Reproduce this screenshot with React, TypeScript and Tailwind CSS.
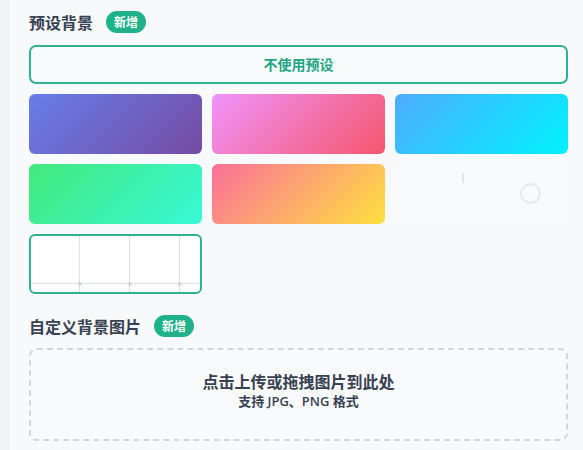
const presets = [
  "bg-[linear-gradient(135deg,#667eea_0%,#764ba2_100%)]",
  "bg-[linear-gradient(135deg,#f093fb_0%,#f5576c_100%)]",
  "bg-[linear-gradient(135deg,#4facfe_0%,#00f2fe_100%)]",
  "bg-[linear-gradient(135deg,#43e97b_0%,#38f9d7_100%)]",
  "bg-[linear-gradient(135deg,#fa709a_0%,#fee140_100%)]",
];

function Badge() {
  return (
    <span className="ml-[13px] inline-flex h-[22px] items-center rounded-full bg-[#1fb28a] px-[8px] text-[12px] font-bold leading-none text-white">
      新增
    </span>
  );
}

export default function App() {
  return (
    <div
      className="flex h-[450px] w-[583px] overflow-hidden bg-[#f8f9fb]"
      style={{ fontFamily: '"Noto Sans CJK SC", "Noto Sans", sans-serif' }}
    >
      {/* left edge */}
      <div className="w-[9px] shrink-0 border-r border-[#eceef1] bg-[#f3f4f6]" />

      <div className="flex-1 pl-5 pr-[15px] pt-[10px]">
        {/* 预设背景 */}
        <div className="flex h-[24px] items-center">
          <h3 className="text-[16px] font-bold text-[#374151]">预设背景</h3>
          <Badge />
        </div>

        <button className="mt-[11px] flex h-[39px] w-full items-center justify-center rounded-[7px] border-2 border-[#2fb292] bg-[#f8fbfb] text-[14px] font-bold text-[#22a584]">
          不使用预设
        </button>

        <div className="mt-[10px] grid grid-cols-3 gap-x-[10px] gap-y-[10px]">
          {presets.map((p) => (
            <div key={p} className={`h-[60px] rounded-[6px] ${p}`} />
          ))}

          {/* loading tile */}
          <div className="relative h-[60px] rounded-[6px] bg-[#f9fafb]">
            <div className="absolute left-[67px] top-[9px] h-[10px] w-[2px] bg-[#e2e4e7]" />
            <div className="absolute left-[125px] top-[19px] h-[21px] w-[21px] rounded-full border-2 border-[#e8e9eb]" />
          </div>

          {/* selected custom tile */}
          <div className="relative h-[60px] overflow-hidden rounded-[6px] border-2 border-[#2fb292] bg-white">
            <div className="absolute bottom-[8px] left-0 right-0 h-px bg-[#dedfe1]" />
            {[48, 98, 148].map((x) => (
              <div key={x} className="absolute top-0 bottom-0 w-px bg-[#dedfe1]" style={{ left: x }}>
                <span className="absolute bottom-[5px] left-[-2px] text-[6px] leading-none text-[#9ca3af]">×</span>
              </div>
            ))}
          </div>
        </div>

        {/* 自定义背景图片 */}
        <div className="mt-[20px] flex h-[24px] items-center">
          <h3 className="text-[16px] font-bold text-[#374151]">自定义背景图片</h3>
          <Badge />
        </div>

        <div className="mt-[10px] flex h-[93px] flex-col items-center justify-center rounded-[8px] border-2 border-dashed border-[#d4d6da] bg-[#f9fafb] pb-[10px]">
          <p className="text-[16px] font-bold leading-[22px] text-[#374151]">点击上传或拖拽图片到此处</p>
          <p
            className="mt-[1px] text-[13px] font-semibold leading-[17px] text-[#374151]"
            style={{ fontFamily: '"Open Sans", "Noto Sans CJK SC", sans-serif' }}
          >
            支持 JPG、PNG 格式
          </p>
        </div>
      </div>
    </div>
  );
}
